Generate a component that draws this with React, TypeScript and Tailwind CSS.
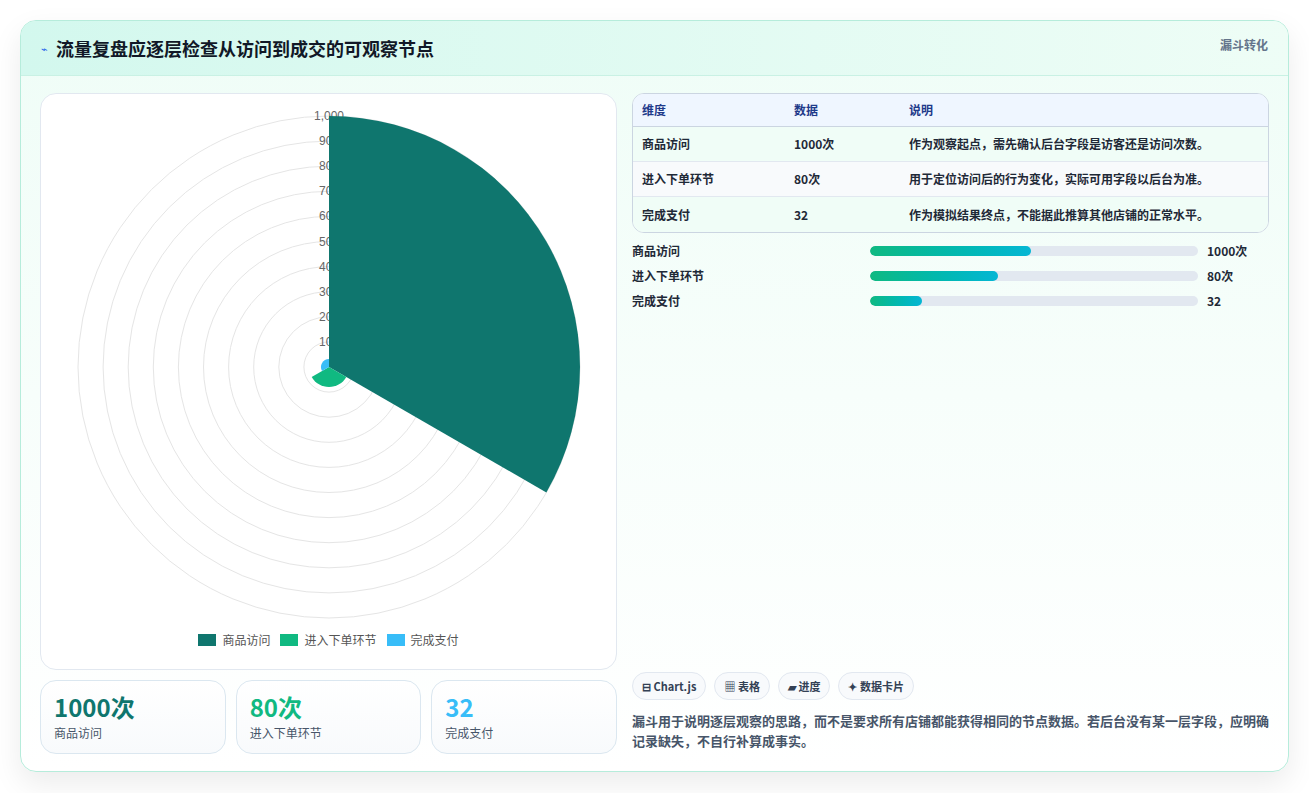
import React from "react";

const F = { fontFamily: '"Noto Sans CJK SC", "Noto Sans", sans-serif' };

function wedge(cx: number, cy: number, r: number, a0: number, a1: number) {
  const p = (a: number) => [cx + r * Math.sin((a * Math.PI) / 180), cy - r * Math.cos((a * Math.PI) / 180)];
  const [x0, y0] = p(a0);
  const [x1, y1] = p(a1);
  return `M${cx} ${cy} L${x0} ${y0} A${r} ${r} 0 0 1 ${x1} ${y1} Z`;
}

function Chart() {
  const cx = 288, cy = 271, R = 251;
  return (
    <svg width="576" height="530" viewBox="0 0 576 530">
      {Array.from({ length: 10 }, (_, i) => (
        <circle key={i} cx={cx} cy={cy} r={(R * (i + 1)) / 10} fill="none" stroke="#e5e5e5" strokeWidth="1" />
      ))}
      {Array.from({ length: 10 }, (_, i) => {
        const v = (i + 1) * 100;
        return (
          <text key={i} x={cx} y={cy - (R * (i + 1)) / 10 + 4} textAnchor="middle" fontSize="12" fill="#666" fontFamily="Liberation Sans, sans-serif">
            {v === 1000 ? "1,000" : v}
          </text>
        );
      })}
      <path d={wedge(cx, cy, R, 0, 120)} fill="#0f766e" />
      <path d={wedge(cx, cy, 20, 120, 240)} fill="#10b981" />
      <path d={wedge(cx, cy, 8, 240, 360)} fill="#38bdf8" />
    </svg>
  );
}

const rows = [
  ["商品访问", "1000次", "作为观察起点，需先确认后台字段是访客还是访问次数。"],
  ["进入下单环节", "80次", "用于定位访问后的行为变化，实际可用字段以后台为准。"],
  ["完成支付", "32", "作为模拟结果终点，不能据此推算其他店铺的正常水平。"],
];
const bars = [
  ["商品访问", "1000次", "49%"],
  ["进入下单环节", "80次", "39%"],
  ["完成支付", "32", "16%"],
];

export default function App() {
  return (
    <div style={F} className="w-[1309px] h-[793px] bg-white p-5 pb-0">
      <div className="w-[1269px] h-[752px] rounded-2xl border border-[#b6ecdb] shadow-[0_12px_30px_rgba(0,0,0,0.08)] overflow-hidden flex flex-col bg-gradient-to-b from-[#effdf7] to-white">
        <div className="h-[55px] shrink-0 flex items-start justify-between px-5 border-b border-[#c9f1e4] bg-gradient-to-r from-[#d3f8ee] to-[#eefdf6]">
          <div className="flex items-center gap-2 h-[55px]">
            <span className="text-[#2563eb] text-[11px]">⌁</span>
            <h1 className="text-[18px] font-bold text-[#111827]">流量复盘应逐层检查从访问到成交的可观察节点</h1>
          </div>
          <div className="text-[12px] font-bold text-[#64748b] mt-[15px]">漏斗转化</div>
        </div>
        <div className="flex-1 flex gap-[15px] px-[19px] pt-[17px]">
          <div className="w-[577px] flex flex-col gap-[10px]">
            <div className="h-[577px] bg-white rounded-2xl border border-[#e2e8f0] flex flex-col items-center pt-[2px]">
              <Chart />
              <div className="flex gap-[10px] items-center text-[12px] text-[#555] mt-[5px]">
                {[["#0f766e", "商品访问"], ["#10b981", "进入下单环节"], ["#38bdf8", "完成支付"]].map(([c, t]) => (
                  <div key={t} className="flex items-center gap-[6px]">
                    <span className="w-[18px] h-[12px] inline-block" style={{ background: c }} />
                    {t}
                  </div>
                ))}
              </div>
            </div>
            <div className="grid grid-cols-3 gap-[10px]">
              {[["1000次", "#0f766e", "商品访问"], ["80次", "#10b981", "进入下单环节"], ["32", "#38bdf8", "完成支付"]].map(([v, c, l]) => (
                <div key={l} className="h-[74px] rounded-2xl border border-[#dbe7f0] bg-gradient-to-b from-white to-[#f8fafc] px-[13px] pt-[8px]">
                  <div className="text-[24px] font-bold leading-[36px]" style={{ color: c }}>{v}</div>
                  <div className="text-[12px] text-[#475569] leading-[16px]">{l}</div>
                </div>
              ))}
            </div>
          </div>
          <div className="flex-1 flex flex-col">
            <div className="rounded-xl border border-[#cbd5e1] overflow-hidden bg-white">
              <div className="grid grid-cols-[152px_115px_1fr] h-[33px] items-center px-[9px] bg-[#eff6ff] border-b border-[#cbd5e1] text-[12px] font-bold text-[#1e3a8a]">
                <div>维度</div><div>数据</div><div>说明</div>
              </div>
              {rows.map((r, i) => (
                <div key={i} className={`grid grid-cols-[152px_115px_1fr] h-[35px] items-center px-[9px] text-[12px] font-bold text-[#1f2937] ${i < 2 ? "border-b border-[#e2e8f0]" : ""} ${i === 1 ? "bg-[#f8fafc]" : "bg-[#f0fdf7]"}`}>
                  <div>{r[0]}</div><div>{r[1]}</div><div>{r[2]}</div>
                </div>
              ))}
            </div>
            <div className="flex flex-col gap-[7px] mt-[9px]">
              {bars.map(([l, v, w]) => (
                <div key={l} className="flex items-center h-[18px] text-[12px] font-bold text-[#1f2937]">
                  <div className="w-[238px]">{l}</div>
                  <div className="w-[328px] h-[10px] rounded-full bg-[#e2e8f0] overflow-hidden">
                    <div className="h-full rounded-full bg-gradient-to-r from-[#10b981] to-[#06b6d4]" style={{ width: w }} />
                  </div>
                  <div className="ml-[9px]">{v}</div>
                </div>
              ))}
            </div>
            <div className="flex-1" />
            <div className="flex gap-[8px] mb-[11px]">
              {["⊟ Chart.js", "▦ 表格", "▰ 进度", "✦ 数据卡片"].map((t) => (
                <span key={t} className="h-[28px] px-[9px] rounded-full border border-[#e2e8f0] bg-[#f8fafc] text-[11px] font-bold text-[#334155] flex items-center">{t}</span>
              ))}
            </div>
            <p className="text-[13px] font-bold text-[#475569] leading-[20px] mb-[20px]">
              漏斗用于说明逐层观察的思路，而不是要求所有店铺都能获得相同的节点数据。若后台没有某一层字段，应明确记录缺失，不自行补算成事实。
            </p>
          </div>
        </div>
      </div>
    </div>
  );
}
